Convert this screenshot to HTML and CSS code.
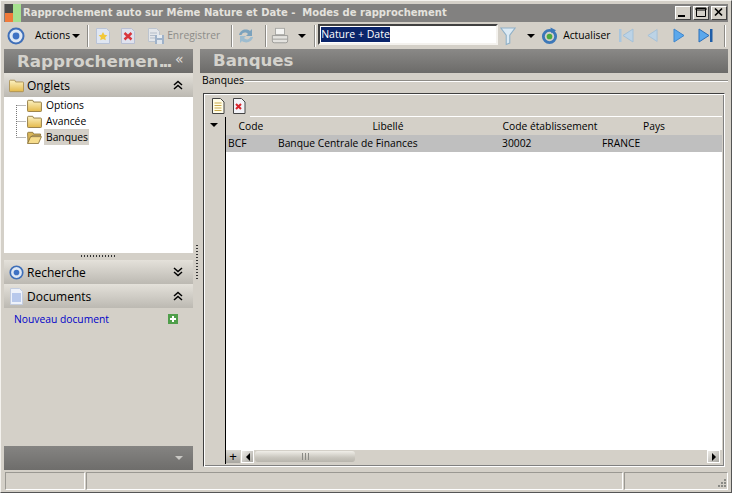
FILE: index.html
```html
<!DOCTYPE html>
<html lang="fr">
<head>
<meta charset="utf-8">
<title>Modes de rapprochement</title>
<link rel="stylesheet" href="styles.css">
</head>
<body>
<div class="window">
  <header class="titlebar">
    <svg class="app-icon" width="16" height="18" viewBox="0 0 16 18"><rect width="8" height="9" fill="#4a4a48"/><rect x="8" width="8" height="18" fill="#a6e08e"/><rect y="9" width="8" height="9" fill="#f07a3a"/></svg>
    <span class="title-text">Rapprochement auto sur Même Nature et Date -&nbsp; Modes de rapprochement</span>
    <div class="win-btns">
      <span class="win-btn"><svg width="15" height="13" viewBox="0 0 15 13"><rect x="3" y="9" width="7" height="2" fill="#000"/></svg></span>
      <span class="win-btn"><svg width="15" height="13" viewBox="0 0 15 13"><path d="M3.5 2.5h9v8h-9z M3 2h10v2H3z" fill="none" stroke="#000"/></svg></span>
      <span class="win-btn"><svg width="15" height="13" viewBox="0 0 15 13"><path d="M4 2.5l7 7M11 2.5l-7 7" stroke="#000" stroke-width="1.7"/></svg></span>
    </div>
  </header>

  <div class="toolbar">
    <svg class="tb-first" width="18" height="18" viewBox="0 0 18 18"><circle cx="9" cy="9" r="7.5" fill="#dfe8f4" stroke="#3f6fb8" stroke-width="2"/><circle cx="9" cy="9" r="3.4" fill="#3f72c4"/></svg>
    <span class="tb-label tb-actions">Actions</span><span class="caret"></span>
    <span class="tb-sep sep-a"></span>
    <svg class="tb-ic ic-new" width="14" height="18" viewBox="0 0 14 18"><path d="M.5 1.5h10l3 3v12H.5z" fill="#dfe6f2" stroke="#b9c3d6"/><path d="M7 5l1.400 2.800 3 .4-2.200 2.100.6 3L7 11.900l-2.800 1.400.6-3-2.200-2.100 3-.4z" fill="#f2c83a"/></svg>
    <svg class="tb-ic ic-del" width="14" height="18" viewBox="0 0 14 18"><path d="M.5 1.500h10l3 3v12H.5z" fill="#dfe2ee" stroke="#b9bfd2"/><path d="M3.500 6l7 6.500M10.500 6l-7 6.500" stroke="#d8343c" stroke-width="2.400"/></svg>
    <svg class="tb-ic ic-save" width="18" height="18" viewBox="0 0 18 18"><path d="M1.500 1.500h8l3 3v10h-11z" fill="#e3e6ea" stroke="#bcc4cf"/><path d="M3 6h7M3 8.500h7M3 11h7" stroke="#b4bdc9"/><rect x="8" y="8" width="9" height="9" fill="#9fb2c9"/><rect x="10" y="8" width="5" height="3" fill="#e6ebf0"/><rect x="10" y="13" width="5" height="4" fill="#dfe5ec"/></svg>
    <span class="tb-label tb-disabled">Enregistrer</span>
    <span class="tb-sep sep-b"></span>
    <svg class="tb-ic ic-sync" width="20" height="20" viewBox="0 0 20 20"><path d="M3 9C4 4 10 2 14 5l2-2v7h-6l2-2C10 6 7 6 5.500 9z" fill="#7ba2bd"/><path d="M17 11c-1 5-7 7-11 4l-2 2v-7h6l-2 2c2 2 5 2 6.500-1z" fill="#9dbccf"/></svg>
    <span class="tb-sep sep-c"></span>
    <svg class="tb-ic ic-print" width="18" height="18" viewBox="0 0 20 18"><rect x="5" y=".5" width="10" height="7" fill="#f4f4f2" stroke="#a5a5a2"/><path d="M1.500 8.500h17v6q0 2-2 2h-13q-2 0-2-2z" fill="#e4e3df" stroke="#999995"/><path d="M2 12.500h16" stroke="#999995"/></svg>
    <span class="caret caret-print"></span>
    <span class="tb-sep sep-d"></span>
    <div class="combo"><span class="combo-sel">Nature + Date</span></div>
    <svg class="tb-ic ic-filter" width="16" height="20" viewBox="0 0 18 20"><path d="M1 1h16l-6 8v9l-4 1.500V9z" fill="#dceaf4" stroke="#8fb0c8" stroke-width="1.200"/></svg>
    <span class="caret caret-filter"></span>
    <svg class="tb-ic ic-refresh" width="17" height="18" viewBox="0 0 18 18"><circle cx="9" cy="9.500" r="6.500" fill="none" stroke="#3d78b8" stroke-width="3"/><circle cx="9" cy="9.500" r="3" fill="#4caa3e"/><path d="M10 0l6 3-5 3z" fill="#3d78b8"/></svg>
    <span class="tb-label tb-refresh">Actualiser</span>
    <svg class="tb-ic ic-nav1" width="15" height="15" viewBox="0 0 15 15"><rect x="0" y="1" width="2.500" height="13" fill="#a9c6de"/><path d="M14 1v13L4 7.500z" fill="#bcd3e6" stroke="#a3c0d8"/></svg>
    <svg class="tb-ic ic-nav2" width="11" height="15" viewBox="0 0 12 15"><path d="M11 1v13L1 7.500z" fill="#bcd3e6" stroke="#a3c0d8"/></svg>
    <svg class="tb-ic ic-nav3" width="12" height="15" viewBox="0 0 12 15"><path d="M1 1v13l10-6.500z" fill="#5ba8ec" stroke="#3f86cc"/></svg>
    <svg class="tb-ic ic-nav4" width="15" height="15" viewBox="0 0 15 15"><path d="M1 1v13l10-6.500z" fill="#5ba8ec" stroke="#2f70b8"/><rect x="12" y="1" width="2.500" height="13" fill="#1f5ea8"/></svg>
    <span class="tb-sep sep-e"></span>
  </div>

  <div class="main">
    <aside class="left">
      <div class="band band-left"><span class="band-text">Rapprochemen<span class="band-dots">...</span></span><span class="collapse">«</span></div>
      <div class="section">
        <svg class="sec-ic" width="15" height="15" viewBox="0 0 17 15"><defs><linearGradient id="fold" x1="0" y1="0" x2="0" y2="1"><stop offset="0" stop-color="#fdf3c4"/><stop offset="1" stop-color="#e4b94a"/></linearGradient></defs><path d="M.5 2.500q0-1 1-1h5l1 2h8q1 0 1 1v9q0 1-1 1h-14q-1 0-1-1z" fill="url(#fold)" stroke="#a98d4e"/></svg>
        <span>Onglets</span>
        <svg class="chev" width="10" height="10" viewBox="0 0 10 10"><path d="M1 5l4-3.500L9 5M1 9l4-3.500L9 9" fill="none" stroke="#000" stroke-width="1.500"/></svg>
      </div>
      <div class="tree">
        <svg class="tree-lines" width="12" height="34" viewBox="0 0 12 34"><path d="M.5 0v32.500M.5.500h10M.5 16.500h10M.5 32.500h10" stroke="#777" stroke-dasharray="1 1" fill="none"/></svg>
        <div class="tree-row"><svg width="17" height="13" viewBox="0 0 17 15"><path d="M.5 2.500q0-1 1-1h5l1 2h8q1 0 1 1v9q0 1-1 1h-14q-1 0-1-1z" fill="url(#fold)" stroke="#8a7238"/></svg><span class="tree-label">Options</span></div>
        <div class="tree-row"><svg width="17" height="13" viewBox="0 0 17 15"><path d="M.5 2.500q0-1 1-1h5l1 2h8q1 0 1 1v9q0 1-1 1h-14q-1 0-1-1z" fill="url(#fold)" stroke="#8a7238"/></svg><span class="tree-label">Avancée</span></div>
        <div class="tree-row"><svg width="17" height="13" viewBox="0 0 17 15"><path d="M.5 2.500q0-1 1-1h5l1 2h8v2h-10L1 14z" fill="#d9b659" stroke="#8a7238"/><path d="M4 6.500h12.500L13 14.500H.5z" fill="#f6dc8c" stroke="#8a7238"/></svg><span class="tree-label tree-sel">Banques</span></div>
      </div>
      <div class="grip"><span class="grip-dots"></span></div>
      <div class="section">
        <svg class="sec-ic" width="15" height="17" viewBox="0 0 18 18"><circle cx="9" cy="9" r="7.500" fill="#dfe8f4" stroke="#3f6fb8" stroke-width="2"/><circle cx="9" cy="9" r="3.400" fill="#3f72c4"/></svg>
        <span>Recherche</span>
        <svg class="chev" width="10" height="10" viewBox="0 0 10 10"><path d="M1 1l4 3.500L9 1M1 5l4 3.500L9 5" fill="none" stroke="#000" stroke-width="1.500"/></svg>
      </div>
      <div class="section">
        <svg class="sec-ic" width="15" height="17" viewBox="0 0 15 17"><path d="M1.500.5h9l3 3v13h-12z" fill="#eef2fa" stroke="#c3cde0"/><rect x="3" y="5" width="9" height="9" fill="#b8c9ec"/></svg>
        <span>Documents</span>
        <svg class="chev" width="10" height="10" viewBox="0 0 10 10"><path d="M1 5l4-3.500L9 5M1 9l4-3.500L9 9" fill="none" stroke="#000" stroke-width="1.500"/></svg>
      </div>
      <div class="docs">
        <a class="doc-link">Nouveau document</a>
        <svg width="10" height="10" viewBox="0 0 10 10"><rect width="10" height="10" fill="#4f9e4a"/><path d="M5 2v6M2 5h6" stroke="#fff" stroke-width="2"/></svg>
      </div>
      <div class="left-foot"><span class="foot-caret"></span></div>
    </aside>

    <div class="splitter"><span class="split-dots"></span></div>

    <section class="right">
      <div class="band band-right"><span class="band-text">Banques</span></div>
      <div class="legend"><span>Banques</span><span class="legend-line"></span></div>
      <div class="frame">
        <div class="frame-tools">
          <svg width="14" height="16" viewBox="0 0 14 16"><path d="M1.500.5h8l3.500 3.500v11.500H1.500z" fill="#fffde8" stroke="#444"/><path d="M3.500 5h7M3.500 7.500h7M3.500 10h7M3.500 12.500h7" stroke="#c9a94c"/></svg>
          <svg width="14" height="16" viewBox="0 0 14 16"><path d="M1.500.5h8l3.500 3.500v11.500H1.500z" fill="#f2f3f8" stroke="#444"/><path d="M4 6l5 5M9 6l-5 5" stroke="#d8242c" stroke-width="2"/></svg>
        </div>
        <div class="grid-area">
          <div class="gutter"><span class="gutter-caret"></span></div>
          <div class="grid-col">
            <div class="table">
              <div class="thead">
                <span class="col-code">Code</span><span class="col-lib">Libellé</span><span class="col-etab">Code établissement</span><span class="col-pays">Pays</span>
              </div>
              <div class="trow">
                <span class="col-code">BCF</span><span class="col-lib">Banque Centrale de Finances</span><span class="col-etab">30002</span><span class="col-pays">FRANCE</span>
              </div>
            </div>
            <div class="hscroll">
              <span class="sb-plus">+</span>
              <span class="sb-btn sb-prev"><span class="tri-left"></span></span>
              <div class="sb-track"><div class="sb-thumb"><span class="thumb-grip"></span></div></div>
              <span class="sb-btn sb-next"><span class="tri-right"></span></span>
            </div>
          </div>
        </div>
      </div>
    </section>
  </div>

  <footer class="status">
    <span class="st-cell st-a"></span>
    <span class="st-cell st-b"></span>
    <span class="st-cell st-c"><svg width="12" height="12" viewBox="0 0 12 12"><path d="M9 2h2v2H9zM9 5h2v2H9zM6 5h2v2H6zM9 8h2v2H9zM6 8h2v2H6zM3 8h2v2H3z" fill="#8a8a85"/></svg></span>
  </footer>
</div>
</body>
</html>
```

FILE: styles.css
```css
* { box-sizing: border-box; }
html, body { margin: 0; padding: 0; }
body { width: 732px; height: 493px; overflow: hidden; background: #d4d0c8; }

.window {
  width: 732px; height: 493px;
  display: flex; flex-direction: column;
  background: #d4d0c8;
  border-style: solid; border-color: #f4f2ee #555 #555 #f4f2ee;
  border-width: 1px;
  padding: 3px 3px 2px 3px;
  font: 10.3px/13px "Open Sans", "Liberation Sans", sans-serif;
  color: #000;
}

/* title bar */
.titlebar {
  height: 18px; flex: none;
  display: flex; align-items: center;
  background: #828180;
  color: #e4e2dd;
  font: bold 10px/18px "DejaVu Sans", sans-serif;
}
.app-icon { flex: none; margin-left: 1px; margin-right: 2px; }
.title-text { flex: 1; white-space: nowrap; overflow: hidden; }
.win-btns { display: flex; gap: 2px; margin-right: 1px; }
.win-btn {
  width: 16px; height: 14px; display: block;
  background: #d4d0c8;
  border: 1px solid; border-color: #fff #404040 #404040 #fff;
}
.win-btn svg { display: block; margin: -1px 0 0 -1px; }

/* toolbar */
.toolbar {
  height: 27px; flex: none;
  display: flex; align-items: center;
}
.toolbar svg { flex: none; }
.tb-first { margin-left: 3px; }
.tb-label { white-space: nowrap; }
.tb-actions { margin-left: 10px; }
.caret { width: 0; height: 0; flex: none; margin-left: 2px; border: 4px solid transparent; border-top: 4px solid #000; border-bottom: 0; }
.tb-sep { width: 2px; height: 22px; flex: none; background: linear-gradient(90deg, #8d8b86 50%, #fff 50%); }
.sep-a { margin-left: 7px; }
.ic-new { margin-left: 7px; }
.ic-del { margin-left: 11px; }
.ic-save { margin-left: 12px; }
.tb-disabled { color: #8c8c88; margin-left: 2px; }
.sep-b { margin-left: 11px; }
.ic-sync { margin-left: 3px; }
.sep-c { margin-left: 9px; }
.ic-print { margin-left: 4px; }
.caret-print { margin-left: 9px; }
.sep-d { margin-left: 8px; }
.combo {
  width: 180px; height: 21px; margin-left: 2px; flex: none;
  align-self: flex-start; margin-top: 2px;
  background: #fff;
  border: 2px solid; border-color: #404040 #f4f2ee #f4f2ee #404040;
  padding: 1px;
  font-size: 10.5px; line-height: 15px;
}
.combo-sel { display: inline-block; background: #0a246a; color: #fff; height: 15px; }
.ic-filter { margin-left: 2px; }
.caret-filter { margin-left: 11px; }
.ic-refresh { margin-left: 6px; }
.tb-refresh { margin-left: 5px; }
.ic-nav1 { margin-left: 9px; }
.ic-nav2 { margin-left: 13px; }
.ic-nav3 { margin-left: 15px; }
.ic-nav4 { margin-left: 13px; }
.sep-e { margin-left: 11px; }

/* main */
.main { flex: 1; min-height: 0; display: flex; }
.left { width: 189px; flex: none; display: flex; flex-direction: column; }
.splitter { width: 7px; flex: none; display: flex; align-items: center; justify-content: center; }
.split-dots { display: block; width: 2px; height: 36px; margin-left: 1px; margin-top: 7px; background: repeating-linear-gradient(180deg, #333 0 1px, transparent 1px 3px); }
.right { flex: 1; min-width: 0; display: flex; flex-direction: column; }

.band {
  height: 24px; flex: none;
  display: flex; align-items: center;
  background: linear-gradient(180deg, #8a8987, #6c6b69);
  color: #d4d2cc;
  font: bold 16.6px/24px "DejaVu Sans", sans-serif;
}
.band-left { padding-left: 13px; position: relative; }
.band-right { padding-left: 13px; }
.band-text { white-space: nowrap; }
.band-left .band-text { font-size: 16.7px; }
.band-dots { letter-spacing: -2.4px; }
.collapse { position: absolute; left: 171px; top: -2px; font: 14px/24px "DejaVu Sans", sans-serif; color: #e0dfda; }

.section {
  height: 24px; flex: none;
  display: flex; align-items: center;
  background: linear-gradient(180deg, #e4e1da, #bcb9b2);
  font-size: 12px;
  padding-left: 5px;
}
.sec-ic { flex: none; margin-right: 3px; }
.chev { flex: none; margin-left: auto; margin-right: 10px; }

.tree {
  height: 156px; flex: none;
  background: #fff;
  padding-left: 22px;
  position: relative;
}
.tree-lines { position: absolute; left: 12px; top: 8px; }
.tree-row { height: 16px; display: flex; align-items: center; position: relative; }
.tree-row svg { flex: none; }
.tree-label { margin-left: 1px; padding: 0 1px 0 2px; height: 16px; line-height: 16px; }
.tree-sel { background: #d4d0c8; }

.grip { height: 7px; flex: none; display: flex; justify-content: center; align-items: center; }
.grip-dots { display: block; width: 35px; height: 2px; background: repeating-linear-gradient(90deg, #333 0 1px, transparent 1px 3px); margin-left: -1px; margin-top: -1px; }

.docs { flex: 1; display: flex; align-items: flex-start; padding: 5px 15px 0 10px; justify-content: space-between; }
.docs svg { margin-top: 1px; flex: none; }
.doc-link { color: #0000c8; white-space: nowrap; }

.left-foot {
  height: 24px; flex: none;
  background: linear-gradient(180deg, #858482, #6e6d6b);
  display: flex; align-items: center; justify-content: flex-end;
  padding-right: 10px;
}
.foot-caret { width: 0; height: 0; border: 4px solid transparent; border-top: 4px solid #c9c8c4; border-bottom: 0; }

/* right */
.legend { height: 20px; flex: none; display: flex; align-items: flex-start; padding: 1px 0 0 2px; }
.legend-line { flex: 1; height: 2px; margin-top: 6px; background: linear-gradient(180deg, #8d8b86 50%, #fff 50%); }

.frame {
  flex: none; height: 374px; width: 522px;
  margin-left: 3px;
  border: 1px solid; border-color: #404040 #fff #fff #404040;
  box-shadow: inset 1px 1px 0 #fff, inset -1px -1px 0 #808080;
  padding: 2px 2px 1px 2px;
  display: flex; flex-direction: column;
}
.frame-tools {
  height: 21px; flex: none;
  display: flex; align-items: center; gap: 7px; padding: 0 0 1px 5px;
  background: linear-gradient(#fff, #fff) no-repeat 44px 100% / 100% 1px;
}
.frame-tools svg { flex: none; }
.grid-area { flex: 1; min-height: 0; display: flex; margin-bottom: 1px; }
.gutter { width: 20px; flex: none; padding: 6px 0 0 4px; border-right: 1px solid #000; }
.gutter-caret { display: block; width: 0; height: 0; border: 4px solid transparent; border-top: 4px solid #000; border-bottom: 0; }
.grid-col { flex: 1; min-width: 0; display: flex; flex-direction: column; }
.table { flex: 1; min-height: 0; background: #fff; }
.thead { height: 18px; display: flex; background: #d4d0c8; align-items: center; text-align: center; }
.trow { height: 17px; display: flex; background: #bfbfbf; align-items: center; text-align: left; }
.trow span { padding-left: 2px; white-space: nowrap; }
.thead span { white-space: nowrap; }
.col-code { width: 50px; flex: none; }
.col-lib { width: 224px; flex: none; }
.col-etab { width: 100px; flex: none; }
.col-pays { width: 108px; flex: none; }

.hscroll { height: 13px; flex: none; display: flex; background: #d4d0c8; margin-bottom: 1px; }
.sb-plus { width: 14px; flex: none; font: 13px/13px "Liberation Sans", sans-serif; text-align: center; background: linear-gradient(180deg, #dcdad4, #a8a6a0); }
.sb-btn { width: 13px; flex: none; display: flex; align-items: center; justify-content: center; background: linear-gradient(135deg, #eeece8, #a8a6a0); border: 1px solid #fff; }
.sb-prev { margin-left: 1px; }
.sb-next { margin-right: 2px; }
.tri-left { width: 0; height: 0; border: 4px solid transparent; border-right: 4px solid #000; border-left: 0; }
.tri-right { width: 0; height: 0; border: 4px solid transparent; border-left: 4px solid #000; border-right: 0; }
.sb-track { flex: 1; padding-left: 1px; }
.sb-thumb { width: 100px; height: 11px; margin-top: 1px; border-radius: 3px; display: flex; align-items: center; justify-content: center; background: linear-gradient(180deg, #f0eee8, #c8c5bd 60%, #b8b5ad); }
.thumb-grip { width: 7px; height: 7px; background: repeating-linear-gradient(90deg, #8a8a85 0 1px, transparent 1px 3px); }

/* status */
.status { height: 18px; flex: none; display: flex; gap: 1px; margin-top: 2px; padding-left: 1px; }
.st-cell { display: block; height: 18px; border: 1px solid; border-color: #9a9892 #fff #fff #9a9892; }
.st-a { width: 80px; flex: none; }
.st-b { flex: 1; }
.st-c { width: 104px; flex: none; display: flex; align-items: flex-end; justify-content: flex-end; }
```
